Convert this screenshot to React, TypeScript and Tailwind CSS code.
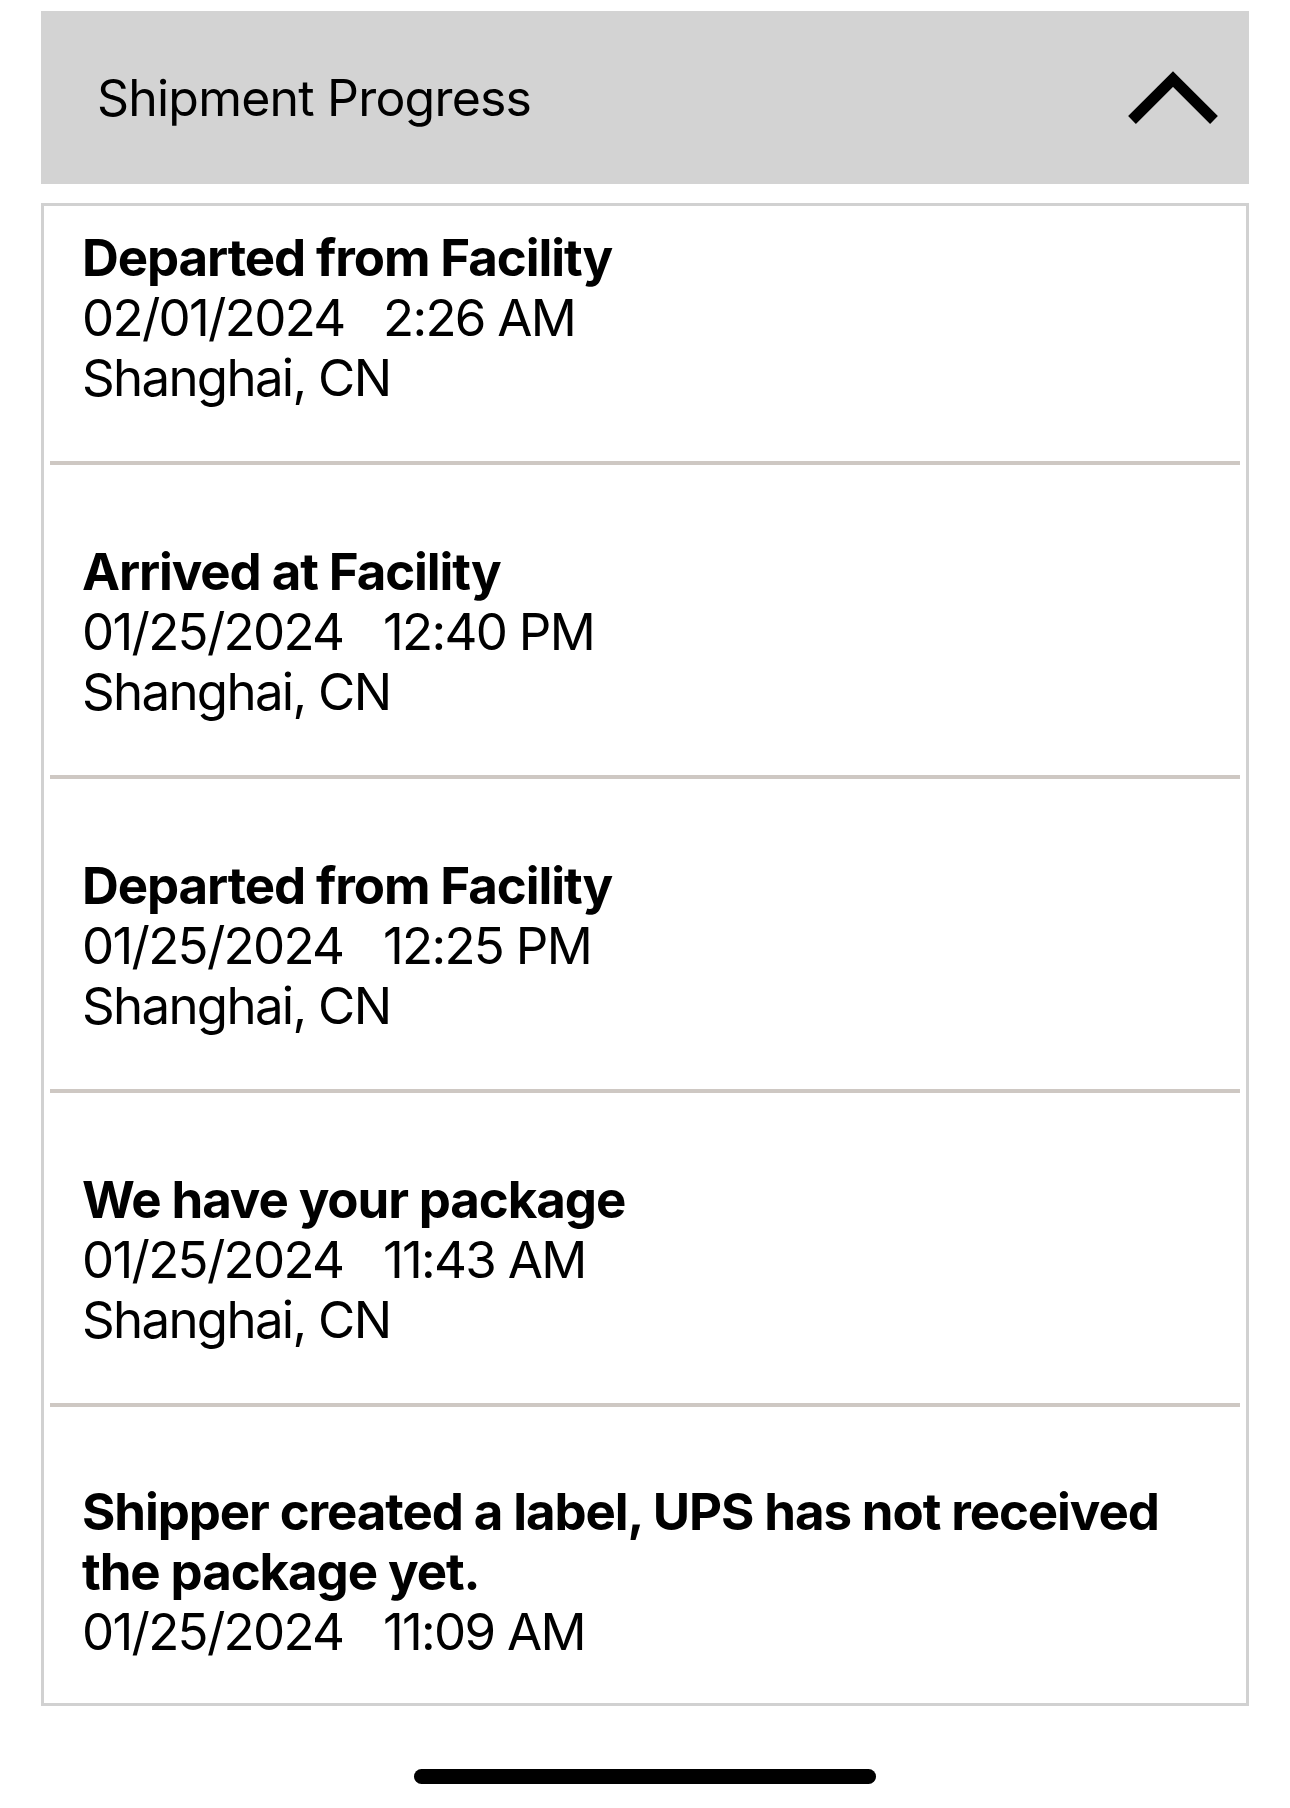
const events = [
  {
    title: "Departed from Facility",
    date: "02/01/2024",
    time: "2:26 AM",
    place: "Shanghai, CN",
  },
  {
    title: "Arrived at Facility",
    date: "01/25/2024",
    time: "12:40 PM",
    place: "Shanghai, CN",
  },
  {
    title: "Departed from Facility",
    date: "01/25/2024",
    time: "12:25 PM",
    place: "Shanghai, CN",
  },
  {
    title: "We have your package",
    date: "01/25/2024",
    time: "11:43 AM",
    place: "Shanghai, CN",
  },
  {
    title: "Shipper created a label, UPS has not received the package yet.",
    date: "01/25/2024",
    time: "11:09 AM",
    place: "",
  },
];

export default function App() {
  return (
    <div
      className="min-h-[1808px] bg-white px-[41px] pt-[11px] text-black"
      style={{ fontFamily: "Inter, 'Noto Sans', sans-serif" }}
    >
      {/* HEADER */}
      <div className="flex h-[173px] items-center justify-between bg-[#d3d3d3] pl-[56px] pr-[30px]">
        <h2 className="text-[50px] font-normal leading-[60px] tracking-[-0.8px]">
          Shipment Progress
        </h2>
        <svg width="92" height="59" viewBox="0 0 92 59" fill="none">
          <polyline
            points="5,52 46,11 87,52"
            stroke="#000"
            strokeWidth="11"
            strokeLinejoin="miter"
          />
        </svg>
      </div>

      {/* EVENTS */}
      <div className="mt-[19px] border-[3px] border-[#d1d1d1] bg-white">
        {events.map((ev, i) => {
          const last = i === events.length - 1;
          return (
            <div key={i}>
              {i > 0 && <div className="mx-[6px] h-[4px] bg-[#cec8c3]" />}
              <div
                className={
                  (i === 0 ? "pt-[22px] " : last ? "pt-[75px] " : "pt-[77px] ") +
                  (last ? "pb-[41px] " : "pb-[53px] ") +
                  "pl-[38px] pr-[40px] text-[51px] leading-[60px] tracking-[-1.7px]"
                }
              >
                <p className="font-bold tracking-[-1.1px]">{ev.title}</p>
                <p>
                  <span className="inline-block w-[301px]">{ev.date}</span>
                  <span>{ev.time}</span>
                </p>
                {ev.place && <p>{ev.place}</p>}
              </div>
            </div>
          );
        })}
      </div>

      {/* HOME INDICATOR */}
      <div className="mt-[63px] flex justify-center">
        <div className="h-[15px] w-[462px] rounded-full bg-black" />
      </div>
    </div>
  );
}
